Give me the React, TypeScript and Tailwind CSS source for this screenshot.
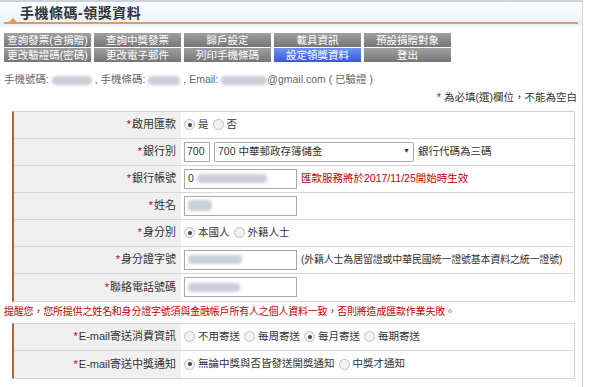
import React from 'react';

const font = { fontFamily: '"Liberation Sans", "Noto Sans CJK TC", sans-serif' };

const navCols: [string, string][] = [
  ['查詢發票(含捐贈)', '更改驗證碼(密碼)'],
  ['查詢中獎發票', '更改電子郵件'],
  ['歸戶設定', '列印手機條碼'],
  ['載具資訊', '設定領獎資料'],
  ['預設捐贈對象', '登出'],
];

function Blur({ w, className = '' }: { w: number; className?: string }) {
  return (
    <span
      className={`inline-block h-[9px] rounded-sm bg-[#c9ced8] blur-[1.5px] align-middle ${className}`}
      style={{ width: w }}
    />
  );
}

function Radio({ checked }: { checked?: boolean }) {
  return (
    <span className="inline-flex h-[11px] w-[11px] items-center justify-center rounded-full border border-[#c0c0c0] bg-[#f2f2f2] mr-[3px]">
      {checked && <span className="h-[4px] w-[4px] rounded-full bg-[#444]" />}
    </span>
  );
}

function Row({ label, children, last }: { label: string; children: React.ReactNode; last?: boolean }) {
  return (
    <div className={`flex h-[27px] ${last ? '' : 'border-b border-[#d6d6d6]'}`}>
      <div className="flex w-[167px] shrink-0 items-center justify-end bg-[#f0f0f0] pr-[5px] text-[11px] text-[#333]">
        <span className="text-[#c00000] mr-[1px]">*</span>
        {label}
      </div>
      <div className="flex flex-1 items-center gap-[4px] whitespace-nowrap pl-[3px] text-[10.5px] text-[#333]">{children}</div>
    </div>
  );
}

function Input({ children }: { children?: React.ReactNode }) {
  return (
    <div className="flex h-[20px] w-[113px] shrink-0 items-center gap-[3px] border border-[#a9a9a9] bg-white px-[3px]">
      {children}
    </div>
  );
}

export default function App() {
  return (
    <div className="relative h-[387px] w-[598px] overflow-hidden bg-white" style={font}>
      <div className="flex h-full">
        <div className="w-[583px] border-r border-[#d8d8d8]">
          {/* 標題 */}
          <div className="relative h-[26px] bg-gradient-to-b from-[#fdfeff] to-[#e7f0fa] border-t-[2px] border-[#c8d3de]">
            <div className="pl-[20px] pt-[1px] text-[14px] font-bold text-[#333] tracking-[0.5px]">手機條碼-領獎資料</div>
            <div className="absolute left-[4px] right-[4px] bottom-[2px] h-[2px] bg-[#e69a55]" />
            <div className="absolute left-[9px] bottom-[4px] h-0 w-0 border-l-[4px] border-r-[4px] border-b-[4px] border-l-transparent border-r-transparent border-b-[#e69a55]" />
          </div>

          {/* 導覽 */}
          <div className="mt-[7px] flex gap-[3px] pl-[4px]">
            {navCols.map(([a, b]) => (
              <div key={a} className="flex w-[87px] flex-col gap-[1px]">
                <div className="flex h-[14px] items-center justify-center bg-gradient-to-b from-[#a0a0a0] to-[#767676] text-[10.5px] leading-none text-white">{a}</div>
                <div
                  className={`flex h-[14px] items-center justify-center text-[10.5px] leading-none text-white ${
                    b === '設定領獎資料'
                      ? 'bg-gradient-to-b from-[#7393f2] to-[#3657d9]'
                      : 'bg-gradient-to-b from-[#a0a0a0] to-[#767676]'
                  }`}
                >
                  {b}
                </div>
              </div>
            ))}
          </div>

          {/* 使用者資訊 */}
          <div className="mt-[10px] pl-[4px] text-[10.5px] text-[#666]">
            手機號碼: <Blur w={40} /> , 手機條碼: <Blur w={32} /> , Email: <Blur w={46} />@gmail.com ( 已驗證 )
          </div>
          <div className="mt-[2px] pr-[5px] text-right text-[10.5px] text-[#333]">
            <span className="text-[#c00000]">*</span> 為必填(選)欄位，不能為空白
          </div>

          {/* 表單一 */}
          <div className="ml-[12px] mt-[5px] w-[563px] border border-l-[2px] border-[#d6d6d6] border-l-[#a8673a]">
            <Row label="啟用匯款">
              <span className="flex items-center"><Radio checked />是</span>
              <span className="flex items-center"><Radio />否</span>
            </Row>
            <Row label="銀行別">
              <div className="flex h-[20px] w-[26px] items-center border border-[#a9a9a9] pl-[2px]">700</div>
              <div className="flex h-[20px] w-[200px] items-center justify-between rounded-[2px] border border-[#a9a9a9] px-[3px]">
                <span>700 中華郵政存簿儲金</span>
                <span className="text-[7px]">▼</span>
              </div>
              <span>銀行代碼為三碼</span>
            </Row>
            <Row label="銀行帳號">
              <Input>
                <span>0</span>
                <Blur w={70} />
              </Input>
              <span className="text-[#c00000]">匯款服務將於2017/11/25開始時生效</span>
            </Row>
            <Row label="姓名">
              <Input>
                <Blur w={24} className="h-[11px]" />
              </Input>
            </Row>
            <Row label="身分別">
              <span className="flex items-center"><Radio checked />本國人</span>
              <span className="flex items-center"><Radio />外籍人士</span>
            </Row>
            <Row label="身分證字號">
              <Input>
                <Blur w={54} />
              </Input>
              <span className="text-[10px] tracking-[-0.2px]">(外籍人士為居留證或中華民國統一證號基本資料之統一證號)</span>
            </Row>
            <Row label="聯絡電話號碼" last>
              <Input>
                <Blur w={52} />
              </Input>
            </Row>
          </div>

          <div className="mt-[2px] pl-[4px] text-[10px] tracking-[-0.2px] text-[#c00000]">
            提醒您，您所提供之姓名和身分證字號須與金融帳戶所有人之個人資料一致，否則將造成匯款作業失敗。
          </div>

          {/* 表單二 */}
          <div className="ml-[12px] mt-[4px] w-[563px] border border-l-[2px] border-[#d6d6d6] border-l-[#a8673a]">
            <Row label="E-mail寄送消費資訊">
              <span className="flex items-center"><Radio />不用寄送</span>
              <span className="flex items-center"><Radio />每周寄送</span>
              <span className="flex items-center"><Radio checked />每月寄送</span>
              <span className="flex items-center"><Radio />每期寄送</span>
            </Row>
            <Row label="E-mail寄送中獎通知" last>
              <span className="flex items-center"><Radio checked />無論中獎與否皆發送開獎通知</span>
              <span className="flex items-center"><Radio />中獎才通知</span>
            </Row>
          </div>
        </div>
        <div className="flex-1 bg-white" />
      </div>
    </div>
  );
}
